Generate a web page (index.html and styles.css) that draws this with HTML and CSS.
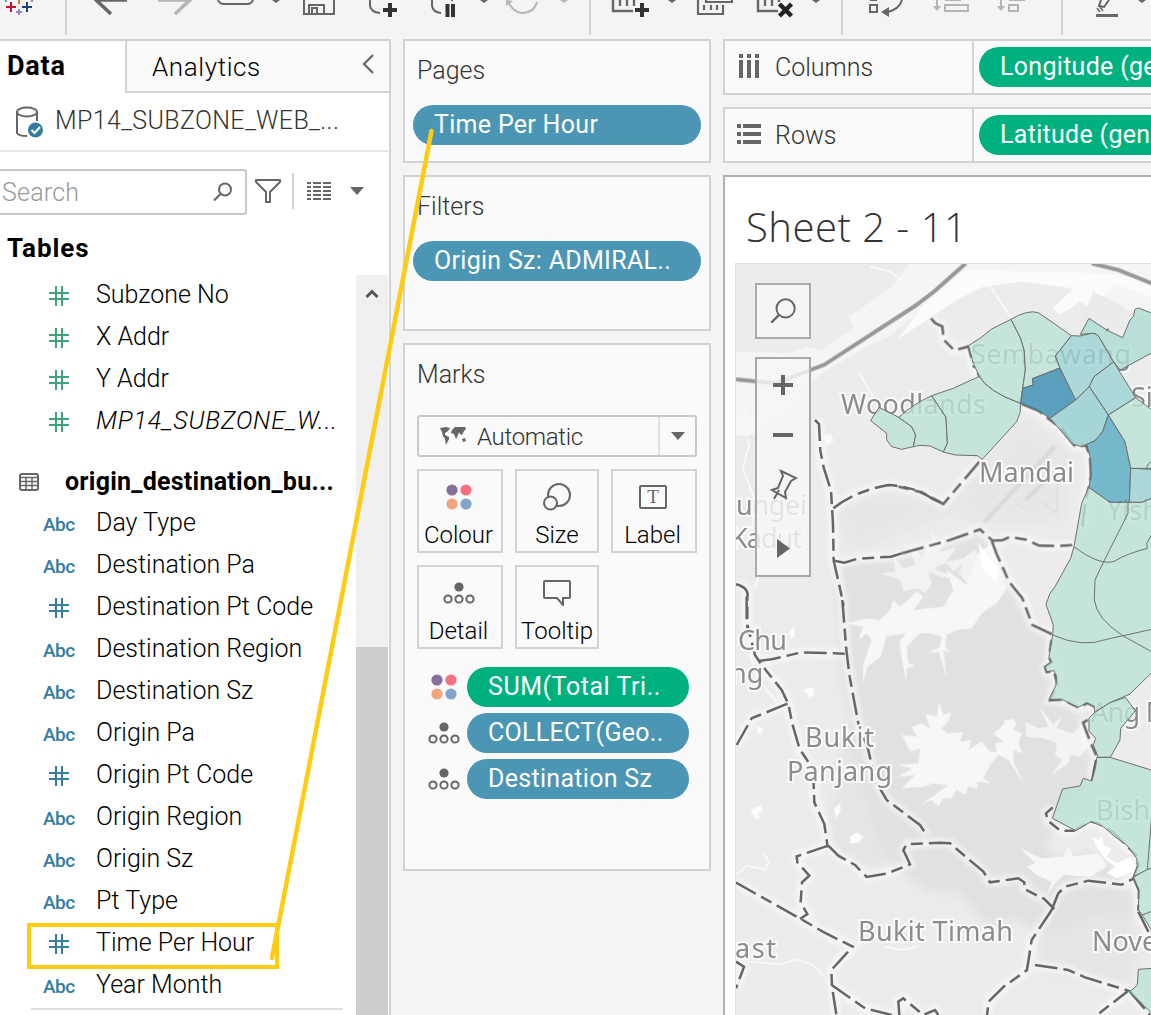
FILE: index.html
```html
<!DOCTYPE html>
<html lang="en">
<head>
<meta charset="utf-8">
<title>Sheet 2 - 11</title>
<link rel="stylesheet" href="styles.css">
</head>
<body>
<svg class="defs" width="0" height="0">
  <defs>
    <symbol id="hash" viewBox="0 0 20 20"><path d="M7 0v20M13 0v20M0 7h20M0 13h20" fill="none" stroke="currentColor" stroke-width="2"/></symbol>
    <symbol id="dots4" viewBox="0 0 26 26"><circle cx="6" cy="6" r="5.6" fill="#866f98"/><circle cx="20" cy="6" r="5.6" fill="#f8707f"/><circle cx="6" cy="20" r="5.6" fill="#f2a57c"/><circle cx="20" cy="20" r="5.6" fill="#82a4cc"/></symbol>
    <symbol id="detail" viewBox="0 0 32 22"><circle cx="16" cy="5" r="4.6" fill="#666"/><g fill="none" stroke="#666" stroke-width="2"><circle cx="5" cy="17" r="3.6"/><circle cx="16" cy="17" r="3.6"/><circle cx="27" cy="17" r="3.6"/></g></symbol>
    <symbol id="lens" viewBox="0 0 20 20"><circle cx="12" cy="7.5" r="6" fill="none" stroke="#666" stroke-width="2"/><path d="M7.5 12L1 18.5" stroke="#666" stroke-width="2.2"/></symbol>
  </defs>
</svg>

<header class="toolbar">
<svg width="1151" height="39" viewBox="0 0 1151 39" fill="none">
  <path d="M11 2v10M6 7h10" stroke="#c8102e" stroke-width="2"/>
  <path d="M27 2v10M22 7h10" stroke="#1f447e" stroke-width="2"/><path d="M19 0v4" stroke="#e8762d" stroke-width="2"/>
  <path d="M19 9v6M16 12h6" stroke="#8593bd" stroke-width="2"/><path d="M6 0v2M32 0v2" stroke="#7199a6" stroke-width="2"/>
  <path d="M66 0v35M590 0v35M842 0v35M1062 0v35" stroke="#d3d3d3" stroke-width="2"/>
  <path d="M95 0h32M95-1l16 15" stroke="#666" stroke-width="3.500"/>
  <path d="M158 0h33M191-1l-16 15" stroke="#b5b5b5" stroke-width="3.500"/>
  <path d="M218 0c1 3 3 4 6 4h23c3 0 5-1 6-4" stroke="#666" stroke-width="2"/>
  <path d="M272 0l4 3 4-3zM480 0l4 3 4-3zM668 0l4 3 4-3zM812 0l4 3 4-3zM1138 0l4 3 4-3z" fill="#666"/><path d="M560 0l4 3 4-3z" fill="#b5b5b5"/>
  <path d="M304 0v14h30V0M309 14V5h15v9M312 14V8h5v6" stroke="#666" stroke-width="2"/>
  <path d="M370 0v6q1 6 10 7M432 0v6q1 6 9 7M452 0v1" stroke="#666" stroke-width="2"/>
  <path d="M390 3v14M383 10h14" stroke="#333" stroke-width="4"/><path d="M447.500 4v13M453 4v13" stroke="#333" stroke-width="4"/>
  <path d="M508 2q6 11 14 11 12 0 15-11" stroke="#b5b5b5" stroke-width="2"/><path d="M506 0v6l7-5z" fill="#b5b5b5"/>
  <path d="M613 0v11h20M758 0v11h20M620 0v6M627 0v6M634 0v6M765 0v6M772 0v6M779 0v2" stroke="#666" stroke-width="2.400"/>
  <path d="M642 3v14M635 10h14" stroke="#333" stroke-width="4"/><path d="M779.500 4l12 12M791.500 4l-12 12" stroke="#222" stroke-width="4.500"/>
  <path d="M698 0v14h25V5M706 0v2h26V0M704 5v5M711 5v5M717 5v5" stroke="#666" stroke-width="2.200"/>
  <path d="M870 5h7v7h-7zM870 0h7M902 0c-2 7-8 11-16 12" stroke="#666" stroke-width="2"/><path d="M881 12l8-5v10z" fill="#666"/>
  <g stroke="#b5b5b5" stroke-width="2"><path d="M937 0v8M945 5h23v6h-23zM945 0h16M1001 0v8M1009 5h9v6h-9zM1009 0h16"/><path d="M933 6l4 5 4-5zM997 6l4 5 4-5z" fill="#b5b5b5" stroke-width="0"/></g>
  <path d="M1096 15.500h22" stroke="#666" stroke-width="3"/><path d="M1101 0l-2 6 5 1 5-7" stroke="#666" stroke-width="2"/><path d="M1097 8l3 4M1100 7l3 4" stroke="#666" stroke-width="1.500"/>
</svg>
</header>

<main class="workspace">
  <aside class="data-pane">
    <div class="tabs">
      <div class="tab-data">Data</div>
      <div class="tab-analytics"><span>Analytics</span><svg width="14" height="20" viewBox="0 0 14 20"><path d="M12 1L3 10l9 9" fill="none" stroke="#666" stroke-width="2.200"/></svg></div>
    </div>
    <div class="source">
      <svg width="30" height="32" viewBox="0 0 30 32"><path d="M2 6v21q1 3 10 3M22 6v9" fill="none" stroke="#666" stroke-width="2"/><ellipse cx="12" cy="6" rx="10" ry="4.500" fill="none" stroke="#666" stroke-width="2"/><circle cx="20.500" cy="24" r="7.500" fill="#357d9e"/><path d="M16.500 24l3 3 5.500-6" fill="none" stroke="#fff" stroke-width="2"/></svg>
      <span>MP14_SUBZONE_WEB_...</span>
    </div>
    <div class="search-row">
      <div class="search"><span>Search</span><svg width="20" height="20"><use href="#lens"/></svg></div>
      <svg class="funnel" width="28" height="26" viewBox="0 0 28 26"><path d="M2 2h24v2L16 14v10h-4V14L2 4z" fill="none" stroke="#666" stroke-width="2" stroke-linejoin="round"/></svg>
      <i class="vline"></i>
      <svg class="listico" width="24" height="20" viewBox="0 0 24 20"><path d="M0 2h24M0 6h24M0 10h24M0 14h24M0 18h24" stroke="#666" stroke-width="2" stroke-dasharray="4 2 8 2 8 0"/></svg>
      <svg width="14" height="8" viewBox="0 0 14 8"><path d="M0 0h14L7 8z" fill="#666"/></svg>
    </div>
    <h2>Tables</h2>
    <div class="fields-wrap">
      <div class="fields">
        <div class="field measure"><svg class="ico"><use href="#hash"/></svg><span>Subzone No</span></div>
        <div class="field measure"><svg class="ico"><use href="#hash"/></svg><span>X Addr</span></div>
        <div class="field measure"><svg class="ico"><use href="#hash"/></svg><span>Y Addr</span></div>
        <div class="field measure"><svg class="ico"><use href="#hash"/></svg><em>MP14_SUBZONE_W...</em></div>
        <div class="table-name"><svg width="20" height="18" viewBox="0 0 20 18"><rect x="1" y="1" width="18" height="16" rx="2" fill="#fff" stroke="#666" stroke-width="2"/><path d="M1 4.500h18M1 8.500h18M1 12.500h18M7 5v12M13 5v12" stroke="#666" stroke-width="1.500"/></svg><span>origin_destination_bu...</span></div>
        <div class="field"><b>Abc</b><span>Day Type</span></div>
        <div class="field"><b>Abc</b><span>Destination Pa</span></div>
        <div class="field"><svg class="ico"><use href="#hash"/></svg><span>Destination Pt Code</span></div>
        <div class="field"><b>Abc</b><span>Destination Region</span></div>
        <div class="field"><b>Abc</b><span>Destination Sz</span></div>
        <div class="field"><b>Abc</b><span>Origin Pa</span></div>
        <div class="field"><svg class="ico"><use href="#hash"/></svg><span>Origin Pt Code</span></div>
        <div class="field"><b>Abc</b><span>Origin Region</span></div>
        <div class="field"><b>Abc</b><span>Origin Sz</span></div>
        <div class="field"><b>Abc</b><span>Pt Type</span></div>
        <div class="field"><svg class="ico"><use href="#hash"/></svg><span>Time Per Hour</span></div>
        <div class="field"><b>Abc</b><span>Year Month</span></div>
        <div class="rule"></div>
      </div>
      <div class="scrollbar"><svg width="14" height="11" viewBox="0 0 14 11"><path d="M1.500 9L7 3.500 12.500 9" fill="none" stroke="#555" stroke-width="3"/></svg><div class="thumb"></div></div>
    </div>
  </aside>

  <section class="shelves">
    <div class="card pages"><h3>Pages</h3><div class="pill blue">Time Per Hour</div></div>
    <div class="card filters"><h3>Filters</h3><div class="pill blue">Origin Sz: ADMIRAL..</div></div>
    <div class="card marks">
      <h3>Marks</h3>
      <div class="dropdown">
        <svg width="28" height="20" viewBox="0 0 28 20"><path d="M1 2l6-1 4 1-2 3-3 2 0 2 4 2 0 2-3 6-1-6-2-3-1-4zM13 4l3-3h10l1 2-2 2-2 4-2-1-1-2-1 3-2 4-2-5-3-1zM23 13l3-1 1 3-3 1z" fill="#666"/></svg>
        <span>Automatic</span>
        <div class="arrow"><svg width="14" height="8" viewBox="0 0 14 8"><path d="M0 0h14L7 8z" fill="#666"/></svg></div>
      </div>
      <div class="buttons">
        <div class="btn"><svg width="26" height="26"><use href="#dots4"/></svg><span>Colour</span></div>
        <div class="btn"><svg width="28" height="28" viewBox="0 0 28 28" fill="#fafafa" stroke="#666" stroke-width="2"><circle cx="16" cy="12" r="11"/><circle cx="7.500" cy="20" r="6.500"/></svg><span>Size</span></div>
        <div class="btn"><svg width="28" height="24" viewBox="0 0 28 24"><rect x="1" y="1" width="26" height="22" rx="1" fill="none" stroke="#666" stroke-width="2"/><text class="tglyph" x="14" y="18" text-anchor="middle">T</text></svg><span>Label</span></div>
        <div class="btn"><svg width="32" height="22"><use href="#detail"/></svg><span>Detail</span></div>
        <div class="btn"><svg width="28" height="26" viewBox="0 0 28 26"><path d="M2 1h24q1 0 1 1v15q0 1-1 1h-6v7l-6-7H2q-1 0-1-1V2q0-1 1-1z" fill="none" stroke="#666" stroke-width="2"/></svg><span>Tooltip</span></div>
      </div>
      <div class="encodings">
        <div class="enc"><svg width="26" height="26"><use href="#dots4"/></svg><div class="pill green">SUM(Total Tri..</div></div>
        <div class="enc"><svg width="32" height="22"><use href="#detail"/></svg><div class="pill blue">COLLECT(Geo..</div></div>
        <div class="enc"><svg width="32" height="22"><use href="#detail"/></svg><div class="pill blue">Destination Sz</div></div>
      </div>
    </div>
  </section>

  <section class="view">
    <div class="shelf">
      <div class="shelf-label"><svg width="24" height="24" viewBox="0 0 24 24" fill="#666"><path d="M2 0h4v4H2zM10 0h4v4h-4zM18 0h4v4h-4zM2 6h4v18H2zM10 6h4v18h-4zM18 6h4v18h-4z"/></svg><span>Columns</span></div>
      <div class="pill green">Longitude (generated)</div>
    </div>
    <div class="shelf">
      <div class="shelf-label"><svg width="24" height="24" viewBox="0 0 24 24" fill="#666"><path d="M0 2h4v4H0zM0 10h4v4H0zM0 18h4v4H0zM6 2h18v4H6zM6 10h18v4H6zM6 18h18v4H6z"/></svg><span>Rows</span></div>
      <div class="pill green">Latitude (generated)</div>
    </div>
    <div class="sheet">
      <h1>Sheet 2 - 11</h1>
      <div class="map">
        <svg width="416" height="752" viewBox="735 263 416 752">
          <defs>
            <filter id="soft" x="-20%" y="-20%" width="140%" height="140%"><feGaussianBlur stdDeviation="7"/></filter>
            <filter id="feather" x="-20%" y="-20%" width="140%" height="140%"><feGaussianBlur stdDeviation="12"/></filter>
            <g id="borders">
              <g transform="translate(-510 0)">
                <path d="M255 510l12 12 4 80 10 50 22 70 6 100 2 110 16 70 14 65"/>
                <path d="M310 775q60-50 165-70 80 5 130 40l40 18 M313 932l30 6 40-12 100-6 32-10"/>
                <path d="M18 1003q40 10 34 40v110"/>
              </g>
              <path d="M93 205l12 14 22 10 4 40 32 32 43-12M205 288l16 60 20 35M238 635L130 762l-65-35-70-17M365 462l50 20 70 55 38 50 35 0 12 30 3 60-20 100-6 60"/>
              <g transform="translate(0 750)">
                <path d="M5 160L150 120l90-32 38 34 30-2 20-9 50 8 40 18 60 1 50-4M275 122l15 40 37 83 40 50 30 80 60 28-10 70 8 14-20 14 5 15 22-3 10 40-22 48 37-2 50 24 25-14 24 12"/>
                <path d="M563 660l-14 8 27 70 20 45"/>
              </g>
              <g transform="translate(-510 1050)">
                <path d="M50-10v75l25 100 20 30 60 75 20 42 12 60 22 75 40 60 4 100 30 65 10 70M337 0l12 150 10 80 26 140 30 80 20 90 35 60 100 75 20 30"/>
                <path d="M85 183l40-5 90-21 130 4M20 435l45-80 110-45M295 737l-95 32 2 18 36 40-22 20-4 60 20 35-22 15M295 737l30 30 50 28 35 36 60-10 70-28-20-43 10-17 100-5 30 2 100 85 20 32 85-12 18 12v20l60 30 30 30M18 848l200 112 60 35 90 45-32 35-32 35 2 50 14 90M305 1155l100 70 80 20"/>
                <path d="M965 930l20-50 20-20 70-18 100 12 35-18 15-40-4-28-70-70-50-30-20-4-50 28h-40l-38-30-5-22 20-18M965 930l-60 90-14 90-70 50-45 45-5 40M915 1095l100 15 50 22 130 40-90 70M18 1085l24 15-24 65M1200 1175l60 70M1225 935l35 70M508 1245l-3-40 15-10 60 50 35-15 10 15M1210 832l17 40-2 60M1098 480l-12 62"/>
              </g>
            </g>
          </defs>
          <rect x="735" y="263" width="416" height="752" fill="#ececec"/>
          <g transform="translate(900 250) scale(.33333)">
            <!-- straits -->
            <path d="M-500 305h60l100 5 65-20 35 10 100-65-15-35 90-60 40-30 60-75h750v150l-30 30-35-20-160-65-60-15-15-20-85-12-90 5-90 15-80 20-180 140-65 30-120 70-60 50-45 70-60 30-50 40-100 5z" fill="#f5f5f5"/>
            <path d="M-10 270l180-120 80-40 120-15 150 20-60 60 20 20 60-40 40 25 60-80 80 30 60 20v-60L600 70 200 60 100 130z" fill="#fbfbfb"/>
            <path d="M580 125l93 45-22 65-54-35-50 5z" fill="#ebebeb"/>
            <path d="M-500 510l35-30 35 50-30 30-40-10zM-230 560l20-12 12 25-22 12z" fill="#f8f8f8"/>
            <path d="M-460 565l8 20-20 70 35 90-8 110 30 90-20 70M270 108l70 105M-125 365l45 75M-90 50l60 15 30 22" fill="none" stroke="#fafafa" stroke-width="5"/>
            <!-- reserves -->
            <g fill="#e1e1e1" filter="url(#feather)">
              <path d="M-200 775l60-40 100-20 90 20 80 25 130-130 110-125 80 60 70 50-30 210-250-10-100-20-90 35-200 75z" opacity=".4"/>
              <path d="M-195 935l200-20 250-75 65 160 75 120 60 40-10 110 15 80 120 60-20 60 20 150-100 80-45 90 50 40 80-20 100 60 40 110-130 20-140 60-90-50-90 8-80-90-100-5-130-110-70-240-55-310z"/>
              <path d="M-210 1700l50-280 90 230 120 110-70 80-110 20-80-60zM420 1940l90-30 180 20 20 190-30 100-260-60z" opacity=".6"/>
            </g>
            <!-- reservoirs -->
            <g fill="#f7f7f7" transform="translate(0 750)">
              <path d="M250 100l-10 30-15 20 25 35-15 30-35 35-25-35 15-25-30 25-20-25-40 15 50 20 25 15-55-10-35-15 10 35-20 30-20-15-45 10-10-35-60-20 45-5-5-45 30 35 35-10-20-60 40 35 30-50 0-30 15 35 30-10-20 40 50-15-30 45 50-10 40-30 30-60z" opacity=".75"/>
              <path d="M235 160l40-30 18 60 27 75-30 45-45 30-30 45-45 5-30 15-5 35 15 20-20-10 10 80-25-75-30 5 35-20 5-30-35-10h-30l-40 40 5 50 20 5-25 10-2 40-10-55-10-65 20-25-60 10-15 60-40 30-15 50 2-60 25-70-15-20-25 20 15-40-50-10 60-15 40 5 30-30 10-30 20 20 50-45 20 15-30 40 90-10 30-50-20-60 60 45z"/>
              <path d="M235 130l40 50 18 20-3 45-40-30z" fill="#fff"/>
            </g>
            <g fill="#f7f7f7" transform="translate(-510 1050)">
              <path d="M515 405l45 5-15-30 30-10 25 15-15-45 35 10 8-45 12 40 25-10-10 30-20 20 15 15 50-5-10 30 35-5-10 30 40-25 25 30h20l-5-25 25-5-30-25 30-25 5-15 25-3 10 13-10 20 25 10-10 30 13 30-28-10 2 40 33 65-50-75-30-15-25 30-20 40 25 15-45-5 5 20-30-5-10 25-25-15-15 25-25 0-15 25-20-20-35 15 45-30 40-30-50-5-20 10-70 5 40-40-50 5 40-25-40-10 60-5 5-45-30 10z"/>
              <path d="M925 315l30 40 15 20 25-30-15 40 50 15 25-30 20 70-25 30-30-5-5 25-50 35 30-45-20-15 5-35-40-15-50-5-5-45 40 20 30-5z" opacity=".8"/>
              <path d="M867 740l43 25 25 10 65-5 15-30 15 30 70-10 15 10 15 30-50 30-80-5-25 25-25 35 15-40-45-20-30-25 25-10z"/>
              <path d="M1085 710l20 10 10-15 5 30 25 10-15 25 30 20 45-20 13 40-58 25-30-15 25-20-35-30-20-30z" fill="#fff"/>
              <path d="M178 95l17-20-2 35-12 5zM218 268l30-5 4 22-12 8zM62 630l32-15 2 18-10 5 4 15-16 3zM80 378l20 8-8 18-10-8zM360 712l20-15 20 14-12 16-26 4zM312 625l18-15 2 25-14 20z" fill="#fcfcfc"/>
              <path d="M20 825l30-28 55 10 12-20-15-25M60 1085l90 8 50-15 50 18 30 30M60 160l20 75 60 70M465 1040l50 10 50-10" fill="none" stroke="#fafafa" stroke-width="5"/>
            </g>
            <!-- airstrips -->
            <g fill="none" stroke="#dadada"><path d="M252 816l212-226M378 748l98-92" stroke-width="13"/><path d="M340 752l38 28M420 750l50 40 3-82" stroke-width="3"/></g>
            <!-- causeways -->
            <path d="M-492 388l120 12 145-56 270-175 60-45L197 40M575 40l80 20 105 42" fill="none" stroke="#989898" stroke-width="12"/>
            <use href="#borders" fill="none" stroke="#fff" stroke-width="30" opacity=".5" filter="url(#soft)"/>
            <use href="#borders" class="dash"/>
          </g>
          <g class="places">
            <text x="841" y="414" textLength="145">Woodlands</text>
            <text x="971" y="364" textLength="160">Sembawang</text>
            <text x="979" y="482" textLength="95">Mandai</text>
            <text x="1131" y="407">Si</text>
            <text x="1107" y="520">Yishun</text>
            <text x="736" y="515" textLength="71">ungei</text>
            <text x="731" y="548" textLength="71">Kadut</text>
            <text x="738" y="650" textLength="49">Chu</text>
            <text x="730" y="683">ng</text>
            <text x="805" y="747" textLength="69">Bukit</text>
            <text x="787" y="781" textLength="105">Panjang</text>
            <text x="858" y="941" textLength="155">Bukit Timah</text>
            <text x="735" y="958" textLength="41">ast</text>
            <text x="1092" y="951">Novena</text>
            <text x="1091" y="722" textLength="139">Ang Mo Kio</text>
            <text x="1096" y="820">Bishan</text>
          </g>
          <g transform="translate(900 250) scale(.33333)">
            <g class="zones">
              <path d="M-88 512l25-40 59 30 39 28 12 25-7 35-35 8-30-8-15-20v-20z"/>
              <path d="M-4 502Q40 462 95 437l43 65 4 78-12 26-40-18-30-2-20 4 7-35-12-25z"/>
              <path d="M95 437l65-22 78-36q25 45 123 81v25l-11 30-103 113-15-11-67-2-35-9 12-26-4-78z"/>
              <path d="M205 287l35-22 35-28 58-29 29 57 11 38 3 57-8 55-7 45q-98-36-123-81l-18-39z"/>
              <path d="M333 208q50-30 82-20l35 24 64 45-48 61 14 36-83 32 3 19-32 10 8-55-3-57-11-38z"/>
              <path d="M368 415l32-10-3-19 83-32 47 96-77 55-30-20-57-25z" fill="#368db1"/>
              <path d="M514 257l26 1 35-8q15 0 22 10l44 76-59 44-14 30-41 40-47-96-14-36z" fill="#9dd3d4"/>
              <path d="M541 253l26-48 53 35 48 23 22-53 10-10 5-22 10-4 45 17v115l-99 54-20-24-44-76q-10-14-22-10z" fill="#acdcd4"/>
              <path d="M641 336l66 107-82 52-57-85 14-30z" fill="#9dd3d4"/>
              <path d="M568 410l57 85-17 50-23 27-40 18-28-8-67-77 77-55z" fill="#93cfd2"/>
              <path d="M625 495l50 80 17 75-4 107h-58l-64-45 7-32-3-60-10-37 25-11 23-27z" fill="#57aac3"/>
              <path d="M707 443l53 40v172h-68l-17-80-50-80z"/>
              <path d="M692 655l68 3v85l-35 14h-37z" fill="#9dd3d4"/>
              <path d="M566 712l64 45h96l34-14v520l-70 69-60 26-47 30v-18l-23-12-25 14-30-14-20-10h-37l20-43 2-25-8-18-22 3-5-15 20-15-8-15 11-65 2-30-22-62 12-33 15-20 47-85 10-35 23-130z"/>
              <path d="M583 1388l47-30 46-16 30 40-44 53-2 35-29 52h-36l-15-37 7-20-20-22v-38z"/>
              <path d="M590 1522h40l130 40v290l-18 8-42 20 12-30-2-25-30-40-35-25-35-30-37-15-46 27-70-37 31-88 52-9 10-23 25 8 12-43z"/>
              <path d="M700 1882l42-24 18-5v197l-33-55-12-15 2-60zM715 2158l45-3v140l-70-70 22-20z"/>
            </g>
            <path class="zone-lines" d="M522 890q80 60 123 43 30-20 97-38l-2-15 20-35M684 757v33l-74 147-25 53-2 60q6 55 85 107l92 51M458 1155q90 40 162 13l140-31M742 1858l18-220M727 1995l33-13M760 630q-20 10-20 28M618 244l5-8 4 4"/>
          </g>
        </svg>
        <div class="map-tools">
          <div class="tool"><svg width="26" height="26" viewBox="0 0 20 20"><circle cx="12" cy="8" r="7" fill="none" stroke="#666" stroke-width="1.500"/><path d="M7 13L1 19" stroke="#666" stroke-width="1.800"/></svg></div>
          <div class="tool tall"><svg width="52" height="216" viewBox="0 0 52 216"><path d="M16 26h20M26 16v20M16 76h20" stroke="#666" stroke-width="4"/><path d="M24 112l15 7-5 3-6 11 1 6-14-8 6-2 5-12zM22 131l-5 9" fill="none" stroke="#666" stroke-width="2"/><path d="M20 180v19l13-9.500z" fill="#666"/></svg></div>
        </div>
      </div>
    </div>
  </section>
</main>

<svg class="annotation" width="1151" height="1015" viewBox="0 0 1151 1015"><path d="M29 925h248v42H29z" fill="none" stroke="#fc1" stroke-width="4"/><path d="M431.500 131L272 958" stroke="#fc1" stroke-width="4.500" stroke-linecap="round"/></svg>
</body>
</html>
```
FILE: styles.css
```css
* { box-sizing: border-box; }
body { margin: 0; width: 1151px; height: 1015px; overflow: hidden; position: relative; background: #f4f4f4; color: #000; font: 300 25px/42px Roboto, "Open Sans", sans-serif; }
svg { display: block; flex: none; }
.defs { position: absolute; }
h1, h2, h3 { margin: 0; }
span, em, .pill { white-space: nowrap; }
.toolbar { height: 39px; }
.workspace { display: flex; gap: 12px; height: 976px; }

.data-pane { width: 391px; flex: none; background: #fff; border-top: 2px solid #d3d3d3; border-right: 2px solid #d3d3d3; display: flex; flex-direction: column; }
.tabs { display: flex; height: 52px; flex: none; }
.tab-data { width: 125px; padding: 4px 0 0 7px; font-weight: 700; font-size: 27px; letter-spacing: .8px; }
.tab-analytics { flex: 1; display: flex; justify-content: space-between; align-items: center; padding: 2px 14px 0 25px; border: solid #d3d3d3; border-width: 0 0 2px 2px; background: #fafafa; font-size: 26px; letter-spacing: .6px; }
.tab-analytics svg { margin-top: -6px; }
.source { height: 59px; flex: none; width: 388px; display: flex; align-items: center; gap: 10px; padding: 0 0 2px 15px; border-bottom: 2px solid #e6e6e6; color: #333; letter-spacing: .35px; }
.source svg { margin-top: 2px; }
.search-row { height: 78px; flex: none; display: flex; align-items: center; }
.search { width: 249px; height: 46px; margin: 2px 0 0 -2px; padding: 2px 12px 0 2px; display: flex; align-items: center; justify-content: space-between; border: 2px solid #c8c8c8; border-radius: 3px; color: #999; letter-spacing: .2px; }
.search svg { margin-top: -2px; }
.funnel { margin-left: 7px; }
.vline { width: 2px; height: 36px; margin: 0 13px 0 10px; background: #d3d3d3; }
.listico { margin-right: 19px; }
h2 { height: 45px; padding: 2px 0 0 7px; flex: none; font-size: 26px; line-height: 33px; font-weight: 700; letter-spacing: .9px; }
.fields-wrap { flex: 1; display: flex; justify-content: space-between; min-height: 0; }
.fields { width: 343px; margin-top: -1px; }
.field { display: flex; align-items: center; height: 42px; padding-left: 31px; color: #000; }
.field .ico { width: 20px; height: 20px; margin: 2px 27px 0 18px; color: #357d9e; }
.field em { letter-spacing: .8px; }
.measure .ico { color: #3fa37c; }
.field b { width: 65px; padding: 4px 0 0 12px; color: #357d9e; font-size: 19px; font-weight: 500; letter-spacing: -.5px; }
.table-name { height: 60px; display: flex; align-items: center; gap: 26px; padding: 19px 0 0 19px; font-weight: 700; letter-spacing: .25px; }
.rule { margin: 2px 0 0 31px; height: 2px; background: #e0e0e0; }
.scrollbar { width: 32px; margin-right: 1px; background: #f0f0f0; display: flex; flex-direction: column; align-items: center; padding-top: 13px; }
.thumb { width: 32px; flex: 1; margin-top: 348px; background: #cdcdcd; }

.shelves { width: 308px; flex: none; display: flex; flex-direction: column; gap: 12px; }
.card { border: 2px solid #d3d3d3; background: #fafafa; padding: 9px 8px 0; }
.card h3 { font-size: 25px; font-weight: 300; padding-left: 4px; color: #333; }
.card > .pill { margin-top: 13px; }
.pages { height: 124px; }
.filters { height: 156px; }
.marks { height: 528px; padding: 9px 12px 0; }
.marks h3 { padding-left: 0; }
.pill { height: 40px; line-height: 39px; border-radius: 20px; padding-left: 21px; color: #fff; font-weight: 400; letter-spacing: .3px; overflow: hidden; }
.enc .green { letter-spacing: .55px; }
.blue { background: #4a96b4; }
.green { background: #00b180; }
.dropdown { width: 280px; height: 42px; margin-top: 19px; border: 2px solid #c8c8c8; border-radius: 3px; display: flex; align-items: center; padding-left: 20px; gap: 10px; color: #333; font-size: 24px; letter-spacing: -.3px; }
.dropdown span { padding-top: 1px; }
.arrow { margin-left: auto; width: 37px; height: 38px; border-left: 2px solid #e0e0e0; display: grid; place-items: center; }
.buttons { display: grid; grid-template-columns: 86px 84px 86px; grid-auto-rows: 84px; gap: 12px; margin-top: 12px; }
.btn { border: 2px solid #d3d3d3; display: grid; grid-template-rows: 52px 24px; justify-items: center; align-items: center; padding-right: 3px; }
.btn:nth-child(3n+2) { padding-right: 0; }
.btn span { line-height: 24px; font-size: 24px; }
.tglyph { font: 19px "Liberation Serif", serif; fill: #666; }
.encodings { display: flex; flex-direction: column; gap: 6px; margin-top: 18px; }
.enc { display: grid; grid-template-columns: 50px 222px; align-items: center; }
.enc > svg { justify-self: center; margin-left: 4px; }

.view { flex: 1; min-width: 0; display: flex; flex-direction: column; gap: 12px; }
.shelf { height: 56px; flex: none; display: flex; align-items: center; border: 2px solid #d3d3d3; border-right: 0; background: #fafafa; overflow: hidden; }
.shelf-label { width: 249px; height: 52px; flex: none; display: flex; align-items: center; gap: 14px; padding-left: 12px; border-right: 2px solid #d3d3d3; color: #333; }
.shelf-label svg { margin-top: -3px; }
.shelf-label span { padding-top: 2px; }
.shelf .pill { flex: none; width: 300px; margin-left: 5px; }
.sheet { flex: 1; border: solid #b0b0b0; border-width: 2px 0 0 2px; background: #fff; padding-left: 10px; overflow: hidden; }
h1 { height: 86px; padding: 10px 0 0 11px; font: 300 40px/80px "Open Sans", sans-serif; letter-spacing: .5px; color: #333; white-space: nowrap; }
.map { position: relative; width: 416px; height: 752px; border: solid #ddd; border-width: 1px 0 0 1px; overflow: hidden; }
.map > svg { margin: -1px 0 0 -1px; }
.map-tools { position: absolute; left: 19px; top: 19px; display: flex; flex-direction: column; gap: 18px; }
.tool { width: 56px; height: 56px; border: 2px solid #aaa; background: rgba(247, 247, 247, .82); display: grid; place-items: center; }
.tall { height: 220px; }
.dash { fill: none; stroke: #666; stroke-width: 7.5; stroke-dasharray: 68 18 36 18; stroke-linecap: butt; }
.places { font: 27px "Noto Sans", "Open Sans", sans-serif; fill: #8c8c8c; stroke: #fafafa; stroke-width: 4px; paint-order: stroke; }
.zones { fill: #bbe3d8; fill-opacity: .8; stroke: #6e6e6e; stroke-width: 3; }
.zone-lines { fill: none; stroke: #6e6e6e; stroke-width: 3; }
.annotation { position: absolute; left: 0; top: 0; pointer-events: none; }
```
